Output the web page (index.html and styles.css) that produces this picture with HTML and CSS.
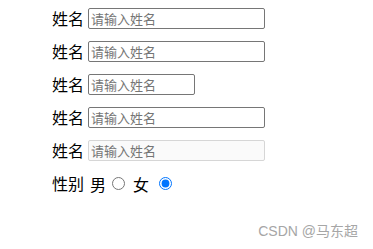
FILE: index.html
```html
<!DOCTYPE html>
<html>
<head>
<meta charset="utf-8">
<link rel="stylesheet" href="styles.css">
</head>
<body>
<div class="form">
  <div class="row"><span class="lbl">姓名</span><input class="field" type="text" placeholder="请输入姓名"></div>
  <div class="row"><span class="lbl">姓名</span><input class="field" type="text" placeholder="请输入姓名"></div>
  <div class="row"><span class="lbl">姓名</span><input class="field short" type="text" placeholder="请输入姓名"></div>
  <div class="row"><span class="lbl">姓名</span><input class="field" type="text" placeholder="请输入姓名"></div>
  <div class="row"><span class="lbl">姓名</span><input class="field" type="text" placeholder="请输入姓名" disabled></div>
  <div class="row radios"><span class="lbl">性别</span><span class="opt">男</span><input class="radio" type="radio" name="sex"><span class="opt">女</span><input class="radio second" type="radio" name="sex" checked></div>
</div>
<div class="mark">CSDN @马东超</div>
</body>
</html>
```

FILE: styles.css
```css
html, body {
  margin: 0;
  padding: 0;
  background: #fff;
}
body {
  padding: 8px 0 0 0;
  font-family: "Noto Sans CJK SC", "Microsoft YaHei", sans-serif;
  font-size: 16px;
  color: #000;
  width: 373px;
  height: 249px;
  box-sizing: border-box;
  position: relative;
  overflow: hidden;
}
.form {
  padding-left: 52px;
}
.row {
  display: flex;
  align-items: center;
  height: 21px;
  margin-bottom: 12px;
}
.lbl {
  display: inline-block;
  width: 32px;
  margin-right: 4px;
  line-height: 21px;
}
.field {
  box-sizing: border-box;
  width: 177px;
  height: 21px;
  margin: 0;
  padding: 1px 2px;
  font-family: "Noto Sans CJK SC", sans-serif;
  font-size: 13px;
  border: 1px solid #767676;
  border-radius: 2px;
}
.field::placeholder {
  color: #757575;
}
.field:disabled {
  background: #fafafa;
  border-color: #d6d6d6;
}
.field.short {
  width: 107px;
}
.radios {
  margin-top: 11px;
}
.opt {
  margin-left: 2px;
}
.radio {
  width: 13px;
  height: 13px;
  margin: 0 6px 0 6px;
}
.radio.second {
  margin-left: 10px;
}
.mark {
  position: absolute;
  right: 15px;
  bottom: 9px;
  font-family: "Liberation Sans", "Noto Sans CJK SC", sans-serif;
  font-size: 14px;
  color: #a6a6a6;
}
```
